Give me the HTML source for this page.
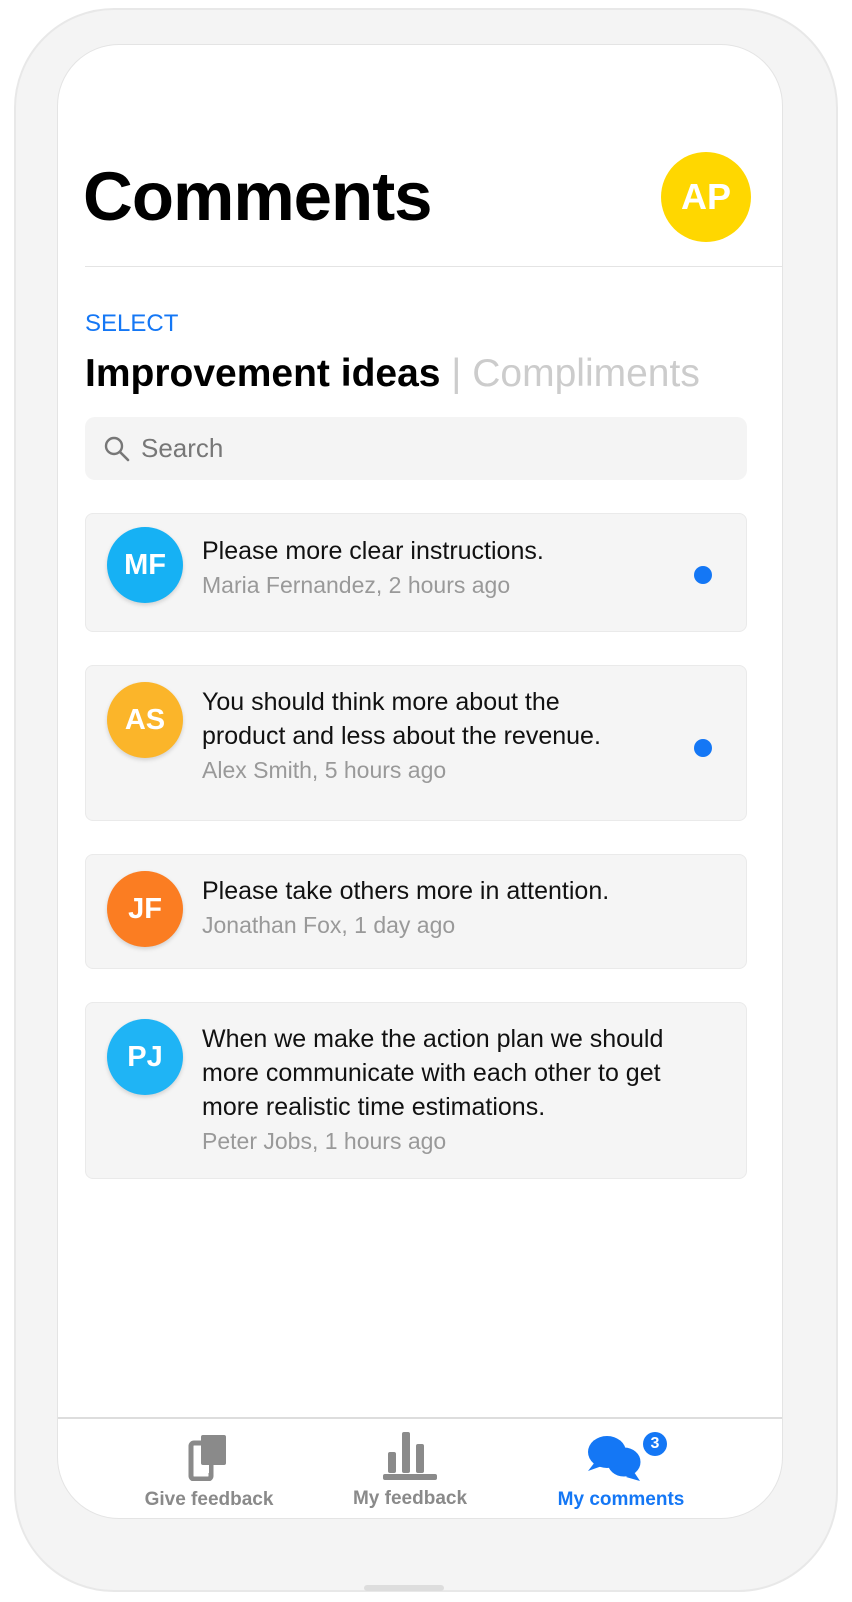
<!DOCTYPE html>
<html><head><meta charset="utf-8"><style>
*{margin:0;padding:0;box-sizing:border-box}
body{width:852px;height:1602px;background:#fff;font-family:"Liberation Sans",sans-serif;position:relative;overflow:hidden}
.outer{position:absolute;left:14px;top:8px;width:824px;height:1584px;border-radius:100px;background:#f4f4f4;border:2px solid #e8e8e8}
.screen{position:absolute;left:57px;top:44px;width:726px;height:1475px;border-radius:62px;background:#fff;border:1px solid #e4e4e4;overflow:hidden}
.abs{position:absolute}
.card{position:absolute;left:27px;width:662px;background:#f5f5f5;border:1px solid #eaeaea;border-radius:8px}
.av{position:absolute;left:21px;width:76px;height:76px;border-radius:50%;color:#fff;font-weight:bold;font-size:29px;display:flex;align-items:center;justify-content:center;box-shadow:0 2px 4px rgba(0,0,0,.15)}
.txt{position:absolute;left:116px;font-size:25px;line-height:34px;color:#111;white-space:nowrap}
.meta{color:#999;font-size:23px}
.dot{position:absolute;left:608px;width:18px;height:18px;border-radius:50%;background:#1477f5}
.lbl{position:absolute;top:1444px;font-size:19px;color:#8a8a8a;font-weight:bold;text-align:center;width:220px}
</style></head><body>
<div class="outer"></div>
<div class="screen">
 <div class="abs" style="left:25px;top:112px;font-size:69px;font-weight:bold;color:#000;letter-spacing:-1px">Comments</div>
 <div class="abs" style="left:603px;top:107px;width:90px;height:90px;border-radius:50%;background:#ffd700;color:#fff;font-weight:bold;font-size:36px;display:flex;align-items:center;justify-content:center">AP</div>
 <div class="abs" style="left:27px;top:221px;width:700px;height:1px;background:#e4e4e4"></div>
 <div class="abs" style="left:27px;top:265px;font-size:24px;color:#1477f5">SELECT</div>
 <div class="abs" style="left:27px;top:307px;font-size:39px;font-weight:bold;color:#000">Improvement ideas <span style="font-weight:normal;color:#ccc">| Compliments</span></div>
 <div class="abs" style="left:27px;top:372px;width:662px;height:63px;background:#f4f4f4;border-radius:10px">
  <svg class="abs" style="left:18px;top:18px" width="28" height="28" viewBox="0 0 28 28"><circle cx="11" cy="11" r="8" fill="none" stroke="#777" stroke-width="2.4"/><line x1="17" y1="17" x2="25" y2="25" stroke="#777" stroke-width="2.6" stroke-linecap="round"/></svg>
  <div class="abs" style="left:56px;top:16px;font-size:26px;color:#777">Search</div>
 </div>
 <div class="card" style="top:468px;height:119px">
  <div class="av" style="top:13px;background:#16b1f4">MF</div>
  <div class="txt" style="top:20px">Please more clear instructions.<br><span class="meta">Maria Fernandez, 2 hours ago</span></div>
  <div class="dot" style="top:52px"></div>
 </div>
 <div class="card" style="top:620px;height:156px">
  <div class="av" style="top:16px;background:#fbb52a">AS</div>
  <div class="txt" style="top:19px">You should think more about the<br>product and less about the revenue.<br><span class="meta">Alex Smith, 5 hours ago</span></div>
  <div class="dot" style="top:73px"></div>
 </div>
 <div class="card" style="top:809px;height:115px">
  <div class="av" style="top:16px;background:#fb7d22">JF</div>
  <div class="txt" style="top:19px">Please take others more in attention.<br><span class="meta">Jonathan Fox, 1 day ago</span></div>
 </div>
 <div class="card" style="top:957px;height:177px">
  <div class="av" style="top:16px;background:#1fb4f5">PJ</div>
  <div class="txt" style="top:19px">When we make the action plan we should<br>more communicate with each other to get<br>more realistic time estimations.<br><span class="meta">Peter Jobs, 1 hours ago</span></div>
 </div>
 <div class="abs" style="left:0;top:1372px;width:726px;height:2px;background:#ddd"></div>
 <svg class="abs" style="left:130px;top:1390px" width="40" height="46" viewBox="0 0 40 46"><rect x="3" y="8" width="20" height="36" rx="3" fill="none" stroke="#8a8a8a" stroke-width="5"/><rect x="13" y="0" width="25" height="30" rx="2" fill="#8a8a8a"/><rect x="15" y="30" width="6" height="8" fill="#fff"/></svg>
 <svg class="abs" style="left:325px;top:1387px" width="54" height="48" viewBox="0 0 54 48"><rect x="5" y="20" width="8" height="21" rx="2" fill="#8a8a8a"/><rect x="19" y="0" width="8" height="41" rx="2" fill="#8a8a8a"/><rect x="33" y="12" width="8" height="29" rx="2" fill="#8a8a8a"/><rect x="0" y="42" width="54" height="6" rx="2" fill="#8a8a8a"/></svg>
 <svg class="abs" style="left:530px;top:1390px" width="60" height="48" viewBox="0 0 60 48"><ellipse cx="36" cy="27" rx="18" ry="16" fill="#1477f5" stroke="#fff" stroke-width="3"/><path d="M46 37 L52 46 L38 42Z" fill="#1477f5"/><ellipse cx="19" cy="17" rx="19" ry="16" fill="#1477f5"/><path d="M7 27 L0 36 L14 31Z" fill="#1477f5"/></svg>
 <div class="abs" style="left:585px;top:1387px;width:24px;height:24px;border-radius:50%;background:#1477f5;color:#fff;font-size:16px;font-weight:bold;display:flex;align-items:center;justify-content:center">3</div>
 <div class="lbl" style="left:41px">Give feedback</div>
 <div class="lbl" style="left:242px;top:1443px">My feedback</div>
 <div class="lbl" style="left:453px;color:#1477f5">My comments</div>
</div>
<div class="abs" style="left:364px;top:1585px;width:80px;height:6px;border-radius:3px;background:#ddd"></div>
</body></html>
